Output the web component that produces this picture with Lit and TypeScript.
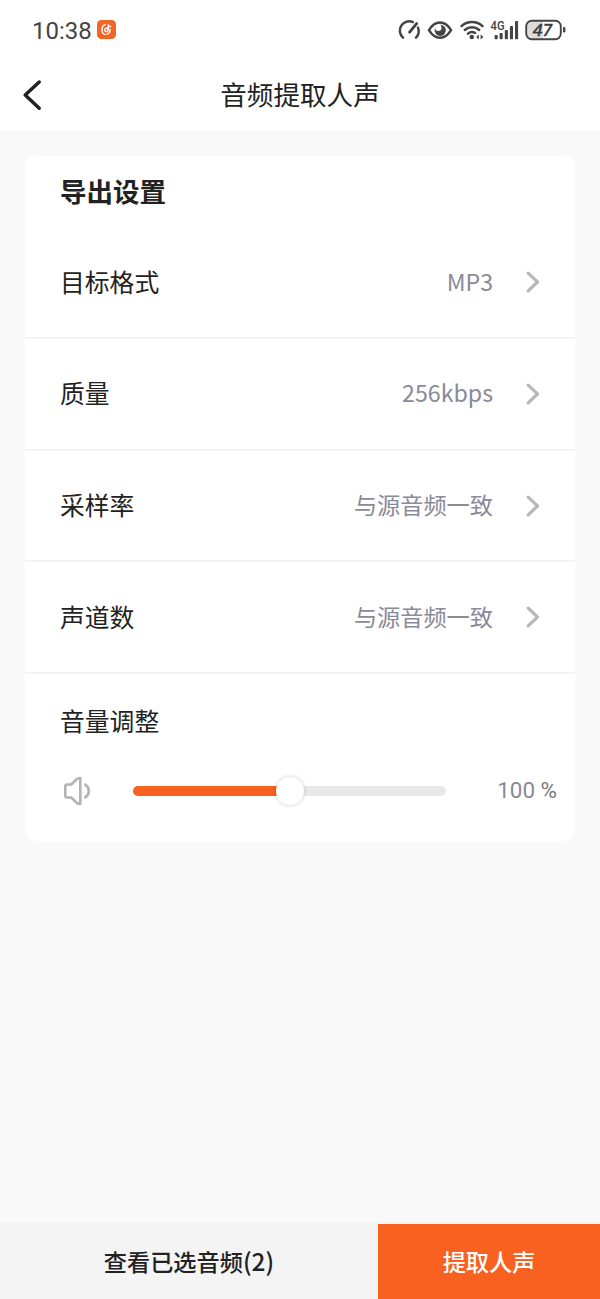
import { LitElement, html, css } from "lit";
import { customElement, property, state } from "lit/decorators.js";

@customElement("status-bar")
class StatusBar extends LitElement {
  static styles = css`
    :host { display: flex; align-items: center; height: 60px; padding: 0 34px 0 32px; color: #444; box-sizing: border-box; }
    .time { font-family: "Roboto", sans-serif; font-size: 24px; line-height: 30px; width: 65px; flex: none; padding-top: 1px; }
    .app { display: block; margin-top: -1px; }
    .icons { margin-left: auto; display: block; }
    .net { font: 500 12.5px "Roboto", sans-serif; }
    .bat { font: italic 500 17px "Noto Sans", sans-serif; }
  `;
  render() {
    return html`
      <span class="time">10:38</span>
      <svg class="app" width="19" height="19" viewBox="0 0 19 19">
        <rect width="19" height="19" rx="4.5" fill="#f36524" />
        <g fill="none" stroke="#fff" stroke-linecap="round" stroke-width="1.4">
          <path d="M8.4 4.6C4 5.4 3.8 13.2 8 14.6" />
          <path d="M10.9 8.6C8.4 7.6 7.2 9.2 7.8 10.6C8.4 12.2 11.2 11.8 11.2 9.8V4.4c.2 1.5 1 2.2 2.5 2.2M13 9.2c.2 2.3-1 4.3-3 5" />
        </g>
      </svg>
      <svg class="icons" width="168" height="30" viewBox="398 15 168 30">
        <g fill="none" stroke="#444" stroke-width="2.5" stroke-linecap="round">
          <path d="M403 37.6A9.3 9.3 0 0 1 412.9 22.1M418 27.6A9.3 9.3 0 0 1 416 37.6" />
          <path d="M409.6 32.2L416.6 23.6" stroke-width="2.9" />
          <path d="M429 30.2C435 20 445 20 451 30.2C445 40.4 435 40.4 429 30.2Z" />
          <path d="M461.5 26.2A15.5 15.5 0 0 1 482.5 26.2M464.8 30A10.8 10.8 0 0 1 479.2 30M468 33.6A6.2 6.2 0 0 1 475 32.8" />
        </g>
        <circle cx="440.2" cy="30.3" r="5.6" fill="#444" />
        <circle cx="438.3" cy="27.8" r="3.2" fill="#fff" />
        <g fill="#444">
          <circle cx="471.8" cy="37" r="2.3" />
          <path d="M478.8 34.4v5l-2.7-2.5zM480.6 34.4v5l2.8-2.5z" />
          <rect x="494.6" y="35" width="3.1" height="4.2" rx=".8" />
          <rect x="499.6" y="33" width="3.1" height="6.2" rx=".8" />
          <rect x="504.8" y="30" width="3.1" height="9.2" rx=".8" />
          <rect x="509.9" y="26" width="3.1" height="13.2" rx=".8" />
          <rect x="515" y="21" width="3.1" height="18.2" rx=".8" />
          <rect x="563" y="27" width="2.4" height="5.6" rx="1" />
        </g>
        <text class="net" x="490.6" y="29.8" fill="#444" textLength="14" lengthAdjust="spacingAndGlyphs">4G</text>
        <path d="M531.5 21H543V39H531.5A5 5 0 0 1 526.5 34V26A5 5 0 0 1 531.5 21Z" fill="#dcdcdc" />
        <rect x="526.2" y="20.8" width="34.6" height="18.4" rx="5.6" fill="none" stroke="#444" stroke-width="1.9" />
        <text class="bat" x="532.8" y="36.1" fill="#3c3c3c" stroke="#3c3c3c" stroke-width=".3" textLength="19.5" lengthAdjust="spacingAndGlyphs">47</text>
      </svg>
    `;
  }
}

@customElement("setting-row")
class SettingRow extends LitElement {
  @property() label = "";
  @property() value = "";
  static styles = css`
    :host { display: flex; align-items: center; box-sizing: border-box; height: 111.6px; padding: 0 35px 0 35px; border-bottom: 2px solid #f2f2f2; }
    .label { font-size: 24.8px; color: #222; padding-bottom: 3px; }
    .value { margin-left: auto; margin-right: 32px; padding-bottom: 3px; font-size: 23.2px; color: #8a8a99; }
    .arrow { display: block; flex: none; }
  `;
  render() {
    return html`
      <span class="label">${this.label}</span>
      <span class="value">${this.value}</span>
      <svg class="arrow" width="15" height="22" viewBox="0 0 15 22">
        <path d="M3.2 2.2L12.5 11L3.2 19.8" fill="none" stroke="#b8b8b8" stroke-width="3.2" stroke-linecap="round" stroke-linejoin="round" />
      </svg>
    `;
  }
}

@customElement("volume-slider")
class VolumeSlider extends LitElement {
  @property({ type: Number }) value = 100;
  @property({ type: Number }) max = 200;
  static styles = css`
    :host { display: grid; grid-template-columns: 73px 313px 1fr; align-items: center; height: 34px; padding: 0 18px 0 35px; }
    .speaker { display: block; margin-left: 3px; }
    .track { display: flex; align-items: center; height: 10px; border-radius: 5px; background: #e8e8e8; }
    .fill { height: 10px; border-radius: 5px 0 0 5px; background: #f8611f; }
    .knob { flex: none; width: 28px; height: 28px; margin-left: -14px; border-radius: 50%; background: #fff; box-shadow: 0 0 4px rgba(0, 0, 0, 0.2); }
    .amount { text-align: right; padding-bottom: 2px; font-family: "Roboto", sans-serif; font-size: 22.4px; color: #8a8a94; white-space: nowrap; }
    .unit { color: #777; }
  `;
  render() {
    return html`
      <svg class="speaker" width="30" height="32" viewBox="0 0 30 32">
        <g fill="none" stroke="#b3b3b3" stroke-width="2.6" stroke-linejoin="round" stroke-linecap="round">
          <path d="M4 9.5H8.2L13.7 4.2Q15 3 17.3 3V29Q15 29 13.7 27.8L8.2 22.5H4Q2.3 22.5 2.3 20.8V11.2Q2.3 9.5 4 9.5Z" />
          <path d="M22.2 9.6Q25.9 12 25.9 16T22.2 22.4" />
        </g>
      </svg>
      <div class="track">
        <div class="fill" style="width:${(this.value / this.max) * 100}%"></div>
        <div class="knob"></div>
      </div>
      <div class="amount">${this.value} <span class="unit">%</span></div>
    `;
  }
}

@customElement("app-root")
class AppRoot extends LitElement {
  @state() private settings = [
    ["目标格式", "MP3"],
    ["质量", "256kbps"],
    ["采样率", "与源音频一致"],
    ["声道数", "与源音频一致"],
  ];
  @state() private selected = 2;

  static styles = css`
    :host { display: flex; flex-direction: column; height: 1299px; background: #f9f9f9; color: #222; font-family: "Noto Sans CJK SC", sans-serif; overflow: hidden; }
    .top { background: #fff; height: 131px; flex: none; }
    .nav { display: grid; grid-template-columns: 60px 1fr 60px; align-items: center; height: 69px; }
    .back { display: block; margin-left: 20px; }
    .title { text-align: center; font-size: 26.6px; line-height: 40px; padding-bottom: 1px; }
    .card { flex: none; margin: 25px 25px 0; height: 685px; background: #fff; border-radius: 10px; display: flex; flex-direction: column; }
    .heading { box-sizing: border-box; height: 71.6px; padding: 15px 35px 0; font-size: 26.5px; line-height: 40px; font-weight: 700; }
    .volume { padding: 27.4px 35px 35px; font-size: 24.8px; line-height: 38px; }
    .actions { display: flex; height: 77px; margin-top: auto; background: #f4f4f4; flex: none; align-items: flex-end; font-size: 23.2px; font-weight: 500; }
    .action { box-sizing: border-box; height: 75px; padding-bottom: 2px; display: flex; align-items: center; justify-content: center; }
    .view { width: 378px; }
    .count { font-size: 24.4px; }
    .extract { flex: 1; background: #f8611f; color: #fff; }
  `;
  render() {
    return html`
      <div class="top">
        <status-bar></status-bar>
        <div class="nav">
          <svg class="back" width="24" height="34" viewBox="0 0 24 34">
            <path d="M19.2 4L5.2 17L19.2 30.2" fill="none" stroke="#222" stroke-width="3.5" stroke-linecap="round" stroke-linejoin="round" />
          </svg>
          <div class="title">音频提取人声</div>
        </div>
      </div>
      <div class="card">
        <div class="heading">导出设置</div>
        ${this.settings.map(([l, v]) => html`<setting-row .label=${l} .value=${v}></setting-row>`)}
        <div class="volume">音量调整</div>
        <volume-slider .value=${100}></volume-slider>
      </div>
      <div class="actions">
        <div class="action view"><span>查看已选音频<span class="count">(${this.selected})</span></span></div>
        <div class="action extract">提取人声</div>
      </div>
    `;
  }
}
